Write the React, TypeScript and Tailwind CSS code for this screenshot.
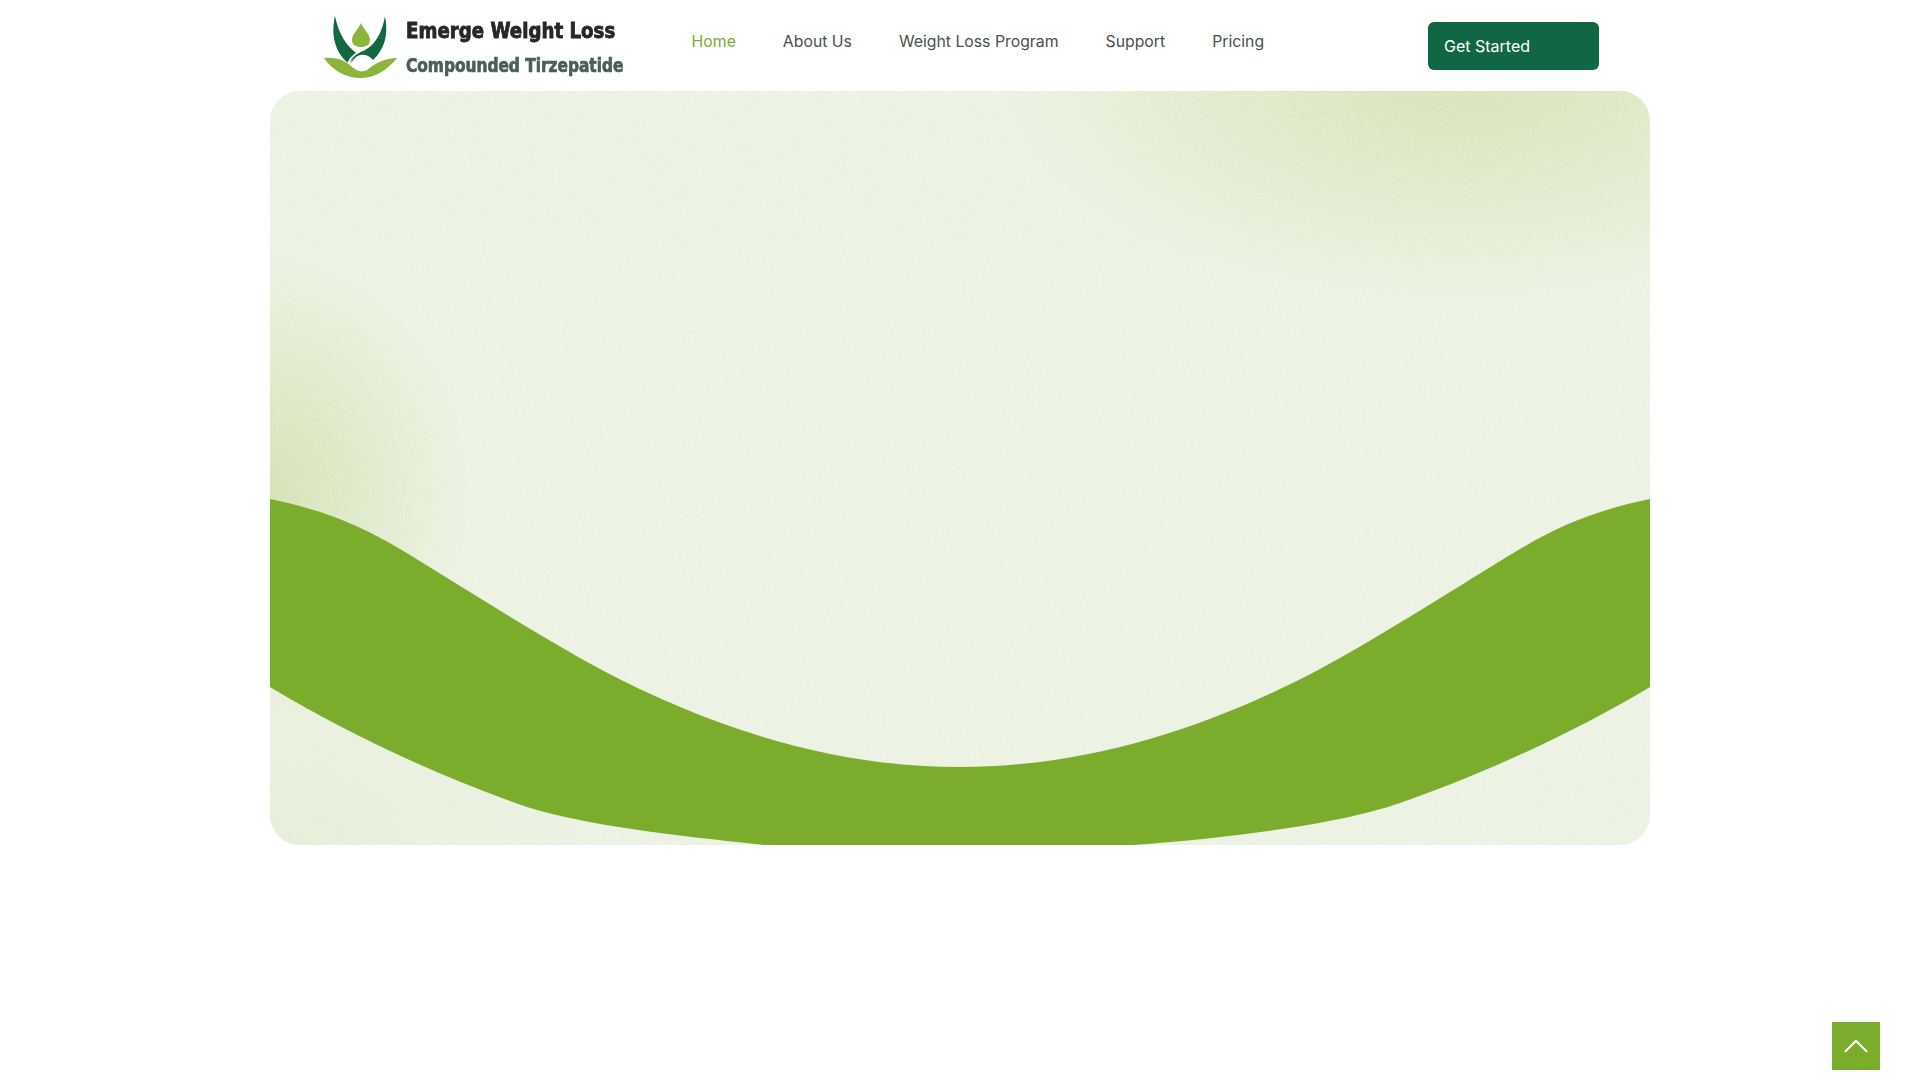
import { ChevronUp } from 'lucide-react'

const navItems = ['Home', 'About Us', 'Weight Loss Program', 'Support', 'Pricing']

function LogoMark() {
  return (
    <svg viewBox="0 0 90 76" className="h-[76px] w-[90px] shrink-0">
      <path d="M46 15C43 22 37 26 37 32C37 37 41 39 46 39C51 39 55 37 55 32C55 26 49 22 46 15Z" fill="#8db53c" />
      <path d="M20 8C16 26 19 43 33 55L43 46C32 39 24 27 20 8Z" fill="#14683f" />
      <path d="M70 8C74 27 69 42 58 52C53 46 45 45 40 50L35 56C39 47 44 44 50 42C60 37 67 25 70 8Z" fill="#14683f" />
      <path d="M33 55C37 47 43 44 50 41" fill="none" stroke="#fff" strokeWidth="1.6" />
      <path d="M9 50C20 49 30 52 37 59C42 63 47 65 52 62C60 55 70 50 82 50C74 60 62 70 46 70C30 70 17 62 9 50Z" fill="#8db53c" />
    </svg>
  )
}

function Logo() {
  return (
    <div className="flex items-center">
      <div className="ml-[-8px] mt-[1px]">
        <LogoMark />
      </div>
      <div className="ml-[1px] mt-[4px] flex flex-col font-['DejaVu_Sans_Condensed','DejaVu_Sans',sans-serif] font-bold whitespace-nowrap">
        <span className="origin-left scale-x-[0.92] text-[22px] leading-[26px] text-[#23282a] [-webkit-text-stroke:0.8px_#23282a]">
          Emerge Weight Loss
        </span>
        <span className="mt-[9px] origin-left scale-x-[0.9] text-[19px] leading-[24px] text-[#4a5f58] [-webkit-text-stroke:0.7px_#4a5f58]">
          Compounded Tirzepatide
        </span>
      </div>
    </div>
  )
}

function Hero() {
  return (
    <section className="relative mx-auto h-[754px] w-[1380px] overflow-hidden rounded-[30px] bg-[#ecf2e2]">
      <div className="absolute inset-0 bg-[radial-gradient(ellipse_460px_230px_at_1190px_-20px,#d4e3b5,transparent)]" />
      <div className="absolute inset-0 bg-[radial-gradient(ellipse_210px_240px_at_-10px_400px,#d3e2b2,transparent)]" />
      <div className="absolute inset-0 bg-[radial-gradient(ellipse_340px_220px_at_0px_754px,#e6eed7,transparent)]" />
      <svg className="absolute inset-0 h-full w-full opacity-50">
        <filter id="grain">
          <feTurbulence type="fractalNoise" baseFrequency="0.7" numOctaves="2" stitchTiles="stitch" />
          <feColorMatrix values="0 0 0 0 1 0 0 0 0 1 0 0 0 0 1 0 0 0 1.2 -0.5" />
        </filter>
        <rect width="100%" height="100%" filter="url(#grain)" />
      </svg>
      <svg viewBox="0 0 1380 754" className="absolute inset-0 h-full w-full">
        <path
          d="M0 408C50 418 90 434 130 458C190 494 260 540 330 578C440 636 560 676 690 676C820 676 940 636 1050 578C1120 540 1190 494 1250 458C1290 434 1330 418 1380 408L1380 596C1300 644 1210 684 1130 712C1070 733 960 747 863 754L495 754C400 744 320 735 257 716C170 686 80 644 0 596Z"
          fill="#7cac2b"
        />
      </svg>
    </section>
  )
}

export default function App() {
  return (
    <div className="relative min-h-screen bg-white font-['Inter',sans-serif]">
      <header className="mx-auto flex h-[91px] w-[1380px] items-center pl-[53px] pr-[51px]">
        <Logo />
        <nav className="ml-[44px] flex gap-[47px] pb-[7px] text-[15.8px] text-[#47524d]">
          {navItems.map((item) => (
            <a key={item} href="#" className={item === 'Home' ? 'text-[#7cac2b]' : ''}>
              {item}
            </a>
          ))}
        </nav>
        <button className="ml-auto h-[48px] w-[171px] rounded-[6px] bg-[#116644] pl-[16px] text-left text-[16px] text-white">
          Get Started
        </button>
      </header>
      <Hero />
      <a
        href="#"
        className="fixed bottom-[10px] right-[40px] flex h-[48px] w-[48px] items-center justify-center bg-[#7cac2b] text-white"
      >
        <ChevronUp className="h-[42px] w-[42px]" strokeWidth={1.2} absoluteStrokeWidth />
      </a>
    </div>
  )
}
